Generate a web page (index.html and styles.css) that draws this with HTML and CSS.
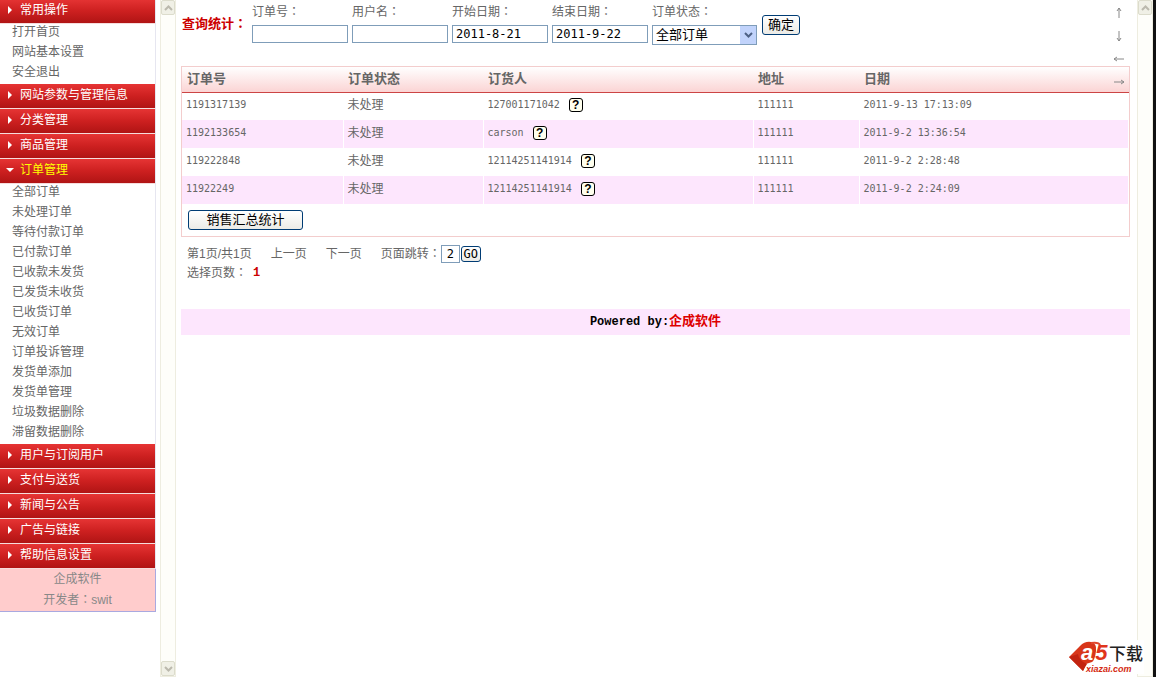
FILE: index.html
```html
<!DOCTYPE html>
<html lang="zh-CN">
<head>
	<meta charset="utf-8">
	<meta name="viewport" content="width=device-width,initial-scale=1.0">
	<title>订单管理</title>
	<link rel="stylesheet" href="styles.css">
</head>
<body>
<div class="frame">
	<!-- left menu -->
	<div class="sidebar">
		<nav class="menu">
			<h3><a href="#">常用操作</a></h3>
			<ul>
				<li><a href="#">打开首页</a></li>
				<li><a href="#">网站基本设置</a></li>
				<li><a href="#">安全退出</a></li>
			</ul>
			<h3><a href="#">网站参数与管理信息</a></h3>
			<h3><a href="#">分类管理</a></h3>
			<h3><a href="#">商品管理</a></h3>
			<h3 class="open"><a href="#">订单管理</a></h3>
			<ul>
				<li><a href="#">全部订单</a></li>
				<li><a href="#">未处理订单</a></li>
				<li><a href="#">等待付款订单</a></li>
				<li><a href="#">已付款订单</a></li>
				<li><a href="#">已收款未发货</a></li>
				<li><a href="#">已发货未收货</a></li>
				<li><a href="#">已收货订单</a></li>
				<li><a href="#">无效订单</a></li>
				<li><a href="#">订单投诉管理</a></li>
				<li><a href="#">发货单添加</a></li>
				<li><a href="#">发货单管理</a></li>
				<li><a href="#">垃圾数据删除</a></li>
				<li><a href="#">滞留数据删除</a></li>
			</ul>
			<h3><a href="#">用户与订阅用户</a></h3>
			<h3><a href="#">支付与送货</a></h3>
			<h3><a href="#">新闻与公告</a></h3>
			<h3><a href="#">广告与链接</a></h3>
			<h3><a href="#">帮助信息设置</a></h3>
		</nav>
		<div class="author">
			<p>企成软件</p>
			<p>开发者<span lang="zh-TW" class="colon">：</span>swit</p>
		</div>
	</div>
	<div class="scrollbar">
		<button type="button" aria-label="up"><svg width="9" height="6"><path d="M1 5 4.500 1.500 8 5"/></svg></button>
		<button type="button" aria-label="down"><svg width="9" height="6"><path d="M1 1 4.500 4.500 8 1"/></svg></button>
	</div>

	<!-- orders -->
	<main class="content">
		<form class="search">
			<strong>查询统计<span lang="zh-TW" class="colon">：</span></strong>
			<div class="field"><label for="orderno">订单号<span lang="zh-TW" class="colon">：</span></label><input type="text" id="orderno"></div>
			<div class="field"><label for="username">用户名<span lang="zh-TW" class="colon">：</span></label><input type="text" id="username"></div>
			<div class="field"><label for="start">开始日期<span lang="zh-TW" class="colon">：</span></label><input type="text" id="start" value="2011-8-21"></div>
			<div class="field"><label for="end">结束日期<span lang="zh-TW" class="colon">：</span></label><input type="text" id="end" value="2011-9-22"></div>
			<div class="field state">
				<label for="state">订单状态<span lang="zh-TW" class="colon">：</span></label>
				<div class="select">
					<select id="state"><option>全部订单</option></select>
					<span class="drop"><svg width="9" height="7"><path d="M1 1 4.500 4.500 8 1"/></svg></span>
				</div>
			</div>
			<button type="button" class="btn">确定</button>
		</form>

		<div class="orders">
			<table>
				<thead>
					<tr><th class="c1">订单号</th><th class="c2">订单状态</th><th class="c3">订货人</th><th class="c4">地址</th><th>日期</th></tr>
				</thead>
				<tbody>
					<tr><td class="num">1191317139</td><td>未处理</td><td class="num">127001171042<button type="button" class="help">?</button></td><td class="num">111111</td><td class="num">2011-9-13 17:13:09</td></tr>
					<tr><td class="num">1192133654</td><td>未处理</td><td class="num">carson<button type="button" class="help">?</button></td><td class="num">111111</td><td class="num">2011-9-2 13:36:54</td></tr>
					<tr><td class="num">119222848</td><td>未处理</td><td class="num">12114251141914<button type="button" class="help">?</button></td><td class="num">111111</td><td class="num">2011-9-2 2:28:48</td></tr>
					<tr><td class="num">11922249</td><td>未处理</td><td class="num">12114251141914<button type="button" class="help">?</button></td><td class="num">111111</td><td class="num">2011-9-2 2:24:09</td></tr>
				</tbody>
			</table>
			<div class="total"><button type="button" class="btn wide">销售汇总统计</button></div>
		</div>

		<div class="pager">
			<div class="row">
				<span>第1页/共1页</span>
				<a href="#">上一页</a>
				<a href="#">下一页</a>
				<div class="jump"><label for="page">页面跳转<span lang="zh-TW" class="colon">：</span></label><input type="text" id="page" value="2"><button type="button" class="btn go">GO</button></div>
			</div>
			<div class="row pages"><span>选择页数<span lang="zh-TW" class="colon">：</span></span><b>1</b></div>
		</div>

		<footer>Powered by:<a href="#">企成软件</a></footer>

		<!-- scroll arrows float over the page -->
		<div class="arrows">
			<svg width="12" height="12"><path d="M6 1V11M4 4 6 1 8 4"/></svg>
			<svg width="12" height="12"><path d="M6 1V11M4 8 6 11 8 8"/></svg>
			<svg width="12" height="12"><path d="M1 6H11M4 4 1 6 4 8"/></svg>
			<svg width="12" height="12"><path d="M1 6H11M8 4 11 6 8 8"/></svg>
		</div>
	</main>
	<div class="scrollbar right">
		<button type="button" aria-label="up"><svg width="9" height="6"><path d="M1 5 4.500 1.500 8 5"/></svg></button>
	</div>
	<svg class="logo" width="76" height="34" viewBox="0 0 76 34">
		<path fill="#d8361a" d="M1 17 12 6Q17 1 23 2Q29 3 28 11Q27 20 24 22L18 24 15 31Q13 29 11 27Z"/>
		<path fill="#c22410" d="M1 17 11 27 15 31Q17 27 19 24Q11 21 10 14Z"/>
		<path fill="none" stroke="#e0482c" stroke-width="2" d="M23 3Q31 2 32 5"/>
		<text x="13" y="20" class="logo-a5"><tspan fill="#fff">a</tspan><tspan fill="#e0351c" dx="2">5</tspan></text>
		<text x="41" y="20" class="logo-cn">下载</text>
		<text x="18" y="32" class="logo-url">xiazai.com</text>
	</svg>
</div>
</body>
</html>
```

FILE: styles.css
```css
* {box-sizing: border-box;}
body {margin: 0; font-family: "Liberation Sans", "Noto Sans CJK SC", sans-serif; font-size: 12px; line-height: 16px; color: #666; background: #fff;}
a {color: inherit; text-decoration: none;}
ul, p, h3 {margin: 0; padding: 0; list-style: none;}
input, select, button {font-family: "DejaVu Sans Mono", "Noto Sans CJK SC", monospace; margin: 0; padding: 0; color: #000;}
/* the full-width colon sits in the middle of its cell */
.colon {font-family: "Noto Sans CJK TC", sans-serif; line-height: 1;}
.num {font-family: "DejaVu Sans Mono", monospace; font-size: 10px;}

.frame {position: relative; display: flex; min-height: 100vh; border-right: 3px solid #111;}

/* menu */
.sidebar {width: 156px; flex: none;}
.menu {margin-top: -1px; border-right: 1px solid #e6e6f0;}
.menu h3 {height: 25px; border-bottom: 1px solid #f6dcdc; padding-left: 20px; position: relative; font-size: 12px; font-weight: normal; line-height: 22px; color: #fff; background: linear-gradient(#e63434, #cd2020 50%, #b01414);}
.menu h3::before {content: ""; position: absolute; left: 8px; top: 7px; border: 4px solid transparent; border-left-color: #fff; border-right: 0;}
.menu h3.open {color: #ff0;}
.menu h3.open::before {left: 6px; top: 9px; border: 4px solid transparent; border-top-color: #fff; border-bottom: 0;}
.menu li {height: 20px; padding-left: 12px;}
.author {background: #fcc; border: 1px solid #a9a9e0; border-width: 0 1px 1px 0; color: #888; text-align: center; line-height: 21px;}

.scrollbar {width: 16px; flex: none; margin-left: 4px; display: flex; flex-direction: column; justify-content: space-between; background: #fefefa; border: 1px solid #eeede0; border-width: 0 1px 1px;}
.scrollbar button {height: 15px; width: 14px; display: flex; align-items: center; justify-content: center; background: #f0f0e6; border: 1px solid #dcdccc; border-radius: 2px;}
.scrollbar path {fill: none; stroke: #bbb9ad; stroke-width: 2;}

.content {flex: 1; min-width: 0; position: relative; padding: 4px 3px 0 5px;}

/* search */
.search {display: flex; gap: 4px; height: 62px; align-items: flex-start;}
.search strong {width: 67px; padding: 12px 0 0 1px; color: #c00; font-size: 13px;}
.field {width: 96px;}
.field.state {width: 105px;}
.field label {display: block; height: 21px;}
.field input {display: block; width: 96px; height: 18px; padding: 0 3px; border: 1px solid #7f9db9; font-size: 12px;}
.select {position: relative; height: 20px;}
.select select {appearance: none; display: block; width: 105px; height: 20px; padding: 0 3px; border: 1px solid #7f9db9; border-radius: 0; background: #fff; font-size: 13px; line-height: 18px;}
.drop {position: absolute; right: 1px; top: 1px; width: 16px; height: 18px; display: flex; align-items: center; justify-content: center; background: #c1d3fb; pointer-events: none;}
.drop path {fill: none; stroke: #4d6185; stroke-width: 2;}
.btn {border: 1px solid #003c74; border-radius: 3px; background: linear-gradient(#fff, #ecebe6); font-size: 13px; line-height: 16px; height: 20px;}
.search .btn {width: 38px; margin: 11px 0 0 1px;}

/* orders table */
.orders {border: 1px solid #f3cdcd;}
.orders table {width: 100%; table-layout: fixed; border-collapse: collapse;}
.orders thead {background: linear-gradient(#fff, #fbd4d4);}
.orders th {height: 25px; padding: 0 5px; border-bottom: 1px solid #c44; text-align: left; font-size: 13px;}
.orders td {height: 28px; padding: 0 4px 2px; border-right: 1px solid #fff;}
.orders tbody tr:nth-child(even) {background: #fde6fd;}
.c1 {width: 161px;}
.c2 {width: 140px;}
.c3 {width: 270px;}
.c4 {width: 106px;}
.help {width: 14px; height: 14px; margin-left: 9px; border: 1px solid #000; border-radius: 3px; background: #ffe; vertical-align: middle; font: bold 12px/12px "Liberation Sans", sans-serif;}
.total {padding: 6px;}
.btn.wide {display: block; width: 115px;}

.pager {padding: 8px 6px 0;}
.pager .row {display: flex; align-items: center; gap: 19px;}
.jump {display: flex; align-items: center;}
.jump input {width: 19px; height: 18px; border: 1px solid #7f9db9; text-align: center; font-size: 12px;}
.btn.go {width: 20px; height: 16px; margin-left: 1px; font-size: 12px; line-height: 14px;}
.pager .pages {gap: 6px; margin-top: 2px;}
.pages b {color: #c00; font-family: "Liberation Mono", monospace;}

footer {margin-top: 28px; height: 26px; background: #fde6fd; color: #000; text-align: center; font: bold 12px/26px "Liberation Mono", "Noto Sans CJK SC", monospace;}
footer a {color: #d00; font-size: 13px;}

.arrows {position: absolute; right: 8px; top: 7px; display: flex; flex-direction: column; gap: 11px;}
.arrows path {fill: none; stroke: #888;}

/* watermark in the corner */
.logo {position: absolute; right: 9px; bottom: 3px; background: #fff;}
.logo text {font-family: "Liberation Sans", "Noto Sans CJK SC", sans-serif;}
.logo .logo-a5 {font-size: 22px; font-weight: bold; font-style: italic;}
.logo .logo-cn {font-size: 17px; font-weight: 500; fill: #222;}
.logo .logo-url {font-size: 9px; font-weight: bold; font-style: italic; fill: #d42a12;}
```
